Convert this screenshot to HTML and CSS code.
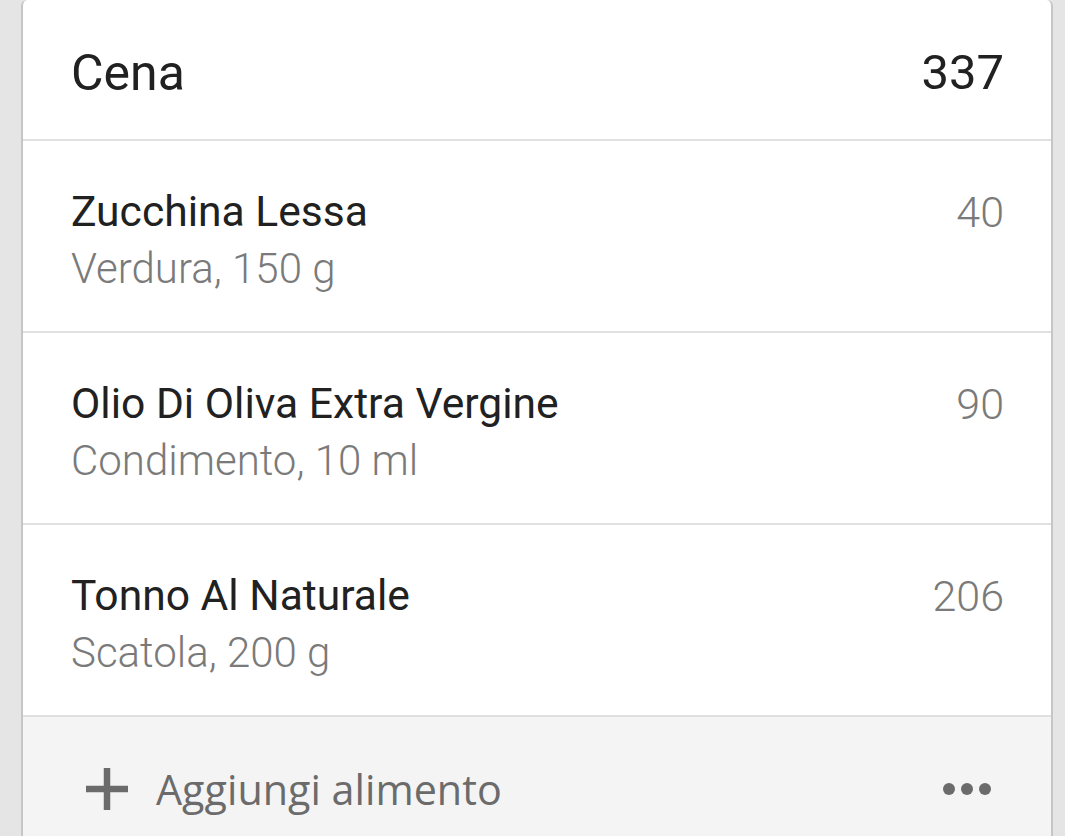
FILE: index.html
```html
<!DOCTYPE html>
<html lang="it">
<head>
<meta charset="utf-8">
<link rel="stylesheet" href="styles.css">
</head>
<body>
<div class="card">
  <div class="header">
    <span class="meal">Cena</span>
    <span class="total">337</span>
  </div>
  <div class="item">
    <div class="info">
      <div class="name">Zucchina Lessa</div>
      <div class="sub">Verdura, 150 g</div>
    </div>
    <div class="kcal">40</div>
  </div>
  <div class="item">
    <div class="info">
      <div class="name">Olio Di Oliva Extra Vergine</div>
      <div class="sub">Condimento, 10 ml</div>
    </div>
    <div class="kcal">90</div>
  </div>
  <div class="item">
    <div class="info">
      <div class="name">Tonno Al Naturale</div>
      <div class="sub">Scatola, 200 g</div>
    </div>
    <div class="kcal">206</div>
  </div>
  <div class="footer">
    <div class="add">
      <svg class="plus" width="44" height="44" viewBox="0 0 44 44"><path d="M22 1V43M1 22H43" stroke="#6b6b6b" stroke-width="6.5" fill="none"/></svg>
      <span class="add-label">Aggiungi alimento</span>
    </div>
    <div class="more"><span></span><span></span><span></span></div>
  </div>
</div>
</body>
</html>
```

FILE: styles.css
```css
html, body {
  margin: 0;
  padding: 0;
  background: #e5e5e5;
  height: 100%;
  overflow: hidden;
}
body {
  font-family: Roboto, "Liberation Sans", sans-serif;
}
.card {
  margin-left: 21px;
  width: 1028px;
  border-left: 2px solid #c6c6c6;
  border-right: 2px solid #c6c6c6;
  border-radius: 6px 6px 0 0;
  background: #fff;
  min-height: 836px;
  display: flex;
  flex-direction: column;
}
.header {
  box-sizing: border-box;
  height: 141px;
  border-bottom: 2px solid #e0e0e0;
  display: flex;
  align-items: center;
  justify-content: space-between;
  padding: 6px 47px 0 48px;
  color: #212121;
  font-size: 50px;
}
.meal { font-weight: 400; }
.total { font-weight: 400; font-size: 49px; }
.item {
  display: flex;
  justify-content: space-between;
  align-items: flex-start;
  padding: 42px 47px 0 48px;
  box-sizing: border-box;
  height: 192px;
  border-bottom: 2px solid #e0e0e0;
}
.name {
  font-size: 42.6px;
  line-height: 56px;
  color: #212121;
}
.sub {
  font-size: 42px;
  line-height: 50px;
  margin-top: 5px;
  font-weight: 300;
  color: #7a7a7a;
}
.kcal {
  font-size: 43px;
  line-height: 56px;
  margin-top: 1px;
  font-weight: 300;
  color: #7a7a7a;
}
.footer {
  flex: 1;
  background: #f4f4f4;
  display: flex;
  justify-content: space-between;
  align-items: flex-start;
  padding: 50px 60px 0 62px;
}
.add {
  display: flex;
  align-items: center;
  gap: 27px;
}
.plus { display: block; }
.add-label {
  font-family: "Open Sans", Roboto, sans-serif;
  font-size: 41.3px;
  color: #6b6b6b;
  line-height: 44px;
}
.more {
  display: flex;
  gap: 6px;
  margin-top: 16px;
}
.more span {
  width: 12px;
  height: 12px;
  border-radius: 50%;
  background: #6b6b6b;
}
```
